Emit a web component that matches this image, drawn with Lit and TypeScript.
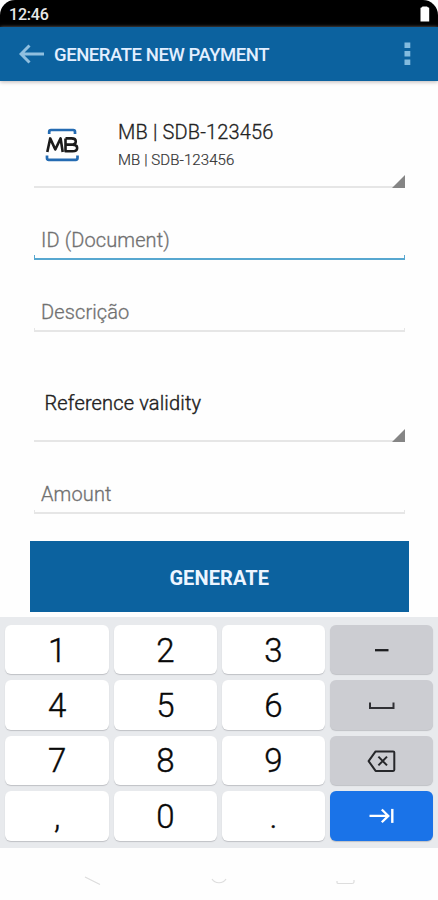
import { LitElement, html, css, svg, nothing } from "lit";
import { customElement, property } from "lit/decorators.js";

@customElement("form-field")
class FormField extends LitElement {
  @property() label = "";
  @property({ type: Boolean, reflect: true }) active = false;
  static styles = css`
    :host { display: flex; box-sizing: border-box; height: 40px; padding-left: 7px; align-items: flex-end; position: relative; }
    .label { font-size: 20px; line-height: 24px; margin-bottom: 7.6px; color: #707070; white-space: nowrap; font-weight: 300; letter-spacing: 0.12px; -webkit-text-stroke: 0.3px #707070; }
    .rule { position: absolute; left: 0; right: 0; bottom: 0; height: 4px; box-sizing: border-box; border: 1px solid #e6e6e6; border-top: 0; border-bottom-width: 2px; }
    :host([active]) .rule { height: 5px; border-color: #57a7d0; }
  `;
  render() {
    return html`<span class="label">${this.label}</span><span class="rule"></span>`;
  }
}

@customElement("spinner-field")
class SpinnerField extends LitElement {
  static styles = css`
    :host { display: flex; box-sizing: border-box; border-bottom: 2px solid #e6e6e6; position: relative; }
    .corner { position: absolute; right: 0; bottom: -2px; width: 13px; height: 13px; display: block; }
  `;
  render() {
    return html`<slot></slot>
      <svg class="corner" viewBox="0 0 13 13"><path d="M13 0V13H0Z" fill="#858585" /></svg>`;
  }
}

const minus = svg`<path d="M14 21.2H27.5" stroke="#1c1d20" stroke-width="2.3" />`;
const space = svg`<path d="M9 17.6V23H32.5V17.6" stroke="#303135" stroke-width="2" />`;
const erase = svg`<path d="M14.6 11.4H32.2Q33.3 11.4 33.3 12.5V29.8Q33.3 30.9 32.2 30.9H14.6L7.6 21.1Z" stroke="#26272a" stroke-width="2" stroke-linejoin="round" /><path d="M17.4 16.6L26 25.4M26 16.6L17.4 25.4" stroke="#26272a" stroke-width="2" />`;
const next = svg`<path d="M8.5 20.9H27M20.8 14.5L27.3 20.9L20.8 27.3" stroke="#fff" stroke-width="2.3" /><path d="M31.3 13.9V27.9" stroke="#fff" stroke-width="2.4" />`;

const keys: { text?: string; icon?: unknown; kind?: string }[] = [
  { text: "1" }, { text: "2" }, { text: "3" }, { icon: minus, kind: "side" },
  { text: "4" }, { text: "5" }, { text: "6" }, { icon: space, kind: "side" },
  { text: "7" }, { text: "8" }, { text: "9" }, { icon: erase, kind: "side" },
  { text: "," }, { text: "0" }, { text: "." }, { icon: next, kind: "go" },
];

@customElement("number-pad")
class NumberPad extends LitElement {
  static styles = css`
    :host { display: grid; box-sizing: border-box; height: 231px; padding: 8px 4.6px 7.5px 5.4px; background: #e8eaed; grid-template-columns: repeat(4, 1fr); grid-template-rows: repeat(4, 1fr); column-gap: 4.6px; row-gap: 6.2px; }
    .key { display: flex; align-items: center; justify-content: center; border-radius: 6px; background: #fff; box-shadow: 0 1px 1px #bfc1c5; color: #080808; font-size: 33px; line-height: 40px; font-weight: 300; -webkit-text-stroke: 0.4px #080808; padding-top: 2px; box-sizing: border-box; min-height: 0; }
    .side { background: #cccdd2; }
    .go { background: #1a73e8; }
    .side, .go { padding: 0; }
    .icon { display: block; width: 41px; height: 41px; fill: none; }
  `;
  render() {
    return keys.map(
      (k) => html`<div class="key ${k.kind ?? ""}">${k.text ?? nothing}${k.icon
        ? html`<svg class="icon" viewBox="0 0 41 41">${k.icon}</svg>`
        : nothing}</div>`
    );
  }
}

@customElement("app-root")
class AppRoot extends LitElement {
  static styles = css`
    :host { display: flex; flex-direction: column; width: 438px; height: 900px; overflow: hidden; background: #fefefe; font-family: Roboto, sans-serif; }
    .status { height: 27px; flex: none; background: #000; border-radius: 15px 15px 0 0; display: flex; justify-content: space-between; box-sizing: border-box; padding: 0 8px 0 9px; color: #e8e8e8; font-size: 16px; line-height: 29px; font-weight: 500; letter-spacing: -0.2px; }
    .battery { width: 10px; height: 16px; margin-top: 6px; }
    .bar { height: 53.5px; flex: none; background: #0c629f; display: flex; align-items: center; padding: 0 27px 0 19px; box-shadow: 0 1px 4px #bdb5b5; }
    .back { width: 26px; height: 20px; margin-right: 9px; }
    .title { flex: 1; color: #e3efff; font-size: 18.5px; font-weight: 500; letter-spacing: -0.44px; white-space: nowrap; padding-top: 2px; }
    .more { width: 7px; height: 24px; }
    .form { flex: none; height: 536.5px; box-sizing: border-box; padding: 0 29.5px 0 30px; display: flex; flex-direction: column; }
    .form > * { flex: none; }
    spinner-field, form-field { margin: 32px 3.5px 0 4px; }
    .account { height: 68px; margin-top: 39.5px; }
    .logo { width: 36px; height: 36px; margin: 7px 0 0 10px; }
    .names { display: flex; flex-direction: column; margin-left: 38px; }
    .name { font-size: 20px; line-height: 24px; color: #222; white-space: nowrap; font-weight: 300; letter-spacing: 0.15px; -webkit-text-stroke: 0.3px #222; }
    .sub { font-size: 15px; line-height: 20px; margin-top: 6px; color: #333; white-space: nowrap; font-weight: 300; letter-spacing: 0.1px; -webkit-text-stroke: 0.2px #333; }
    .validity { height: 60px; margin-top: 50px; }
    .validity-label { font-size: 20px; line-height: 24px; margin: 9px 0 0 10.5px; color: #222; font-weight: 300; letter-spacing: 0.15px; -webkit-text-stroke: 0.4px #222; }
    .generate { border: 0; padding: 2px 0 0; margin-top: 27px; height: 71px; background: #0c629f; color: #edf5ff; font: 700 20px Roboto, sans-serif; letter-spacing: 0.1px; }
    .nav { flex: 1; display: flex; justify-content: center; }
    .nav svg { width: 280px; height: 20px; margin-top: 22px; }
  `;
  render() {
    return html`
      <div class="status">
        <span>12:46</span>
        <svg class="battery" viewBox="0 0 10 16"><path d="M1 1.8Q2 1.5 2.5 0.5H7Q7.5 1.5 9.2 1.8V15.5H.5V1.8Z" fill="#fff" /></svg>
      </div>
      <div class="bar">
        <svg class="back" viewBox="0 0 26 20"><path d="M2 10H25M10.5 1.5L2 10L10.5 18.5" fill="none" stroke="#90bfdf" stroke-width="3" /></svg>
        <span class="title">GENERATE NEW PAYMENT</span>
        <svg class="more" viewBox="0 0 7 24"><path d="M.5 .5H6.3V6H.5ZM.5 9H6.3V14.5H.5ZM.5 17.5H6.3V23H.5Z" fill="#83bbdf" /></svg>
      </div>
      <div class="form">
        <spinner-field class="account">
          <svg class="logo" viewBox="0 0 36 36">
            <path d="M5.2 7V4.7Q5.2 3 7 3H29.2Q31 3 31 4.7V7M3 28.4V31Q3 32.8 4.7 32.8H31.7Q33.5 32.8 33.5 31V28.4" fill="none" stroke="#246bb2" stroke-width="2.7" />
            <path d="M3.3 25L6.2 11.4L11.3 22.5L16.6 11.4L18.7 25M21.5 11.4V24.3H28.5C34.7 24.3 34.7 17.6 28.5 17.6H21.5M21.5 11.4H27.5C33.2 11.4 33.2 17.6 27.5 17.6" fill="none" stroke="#1b1b1b" stroke-width="2.6" stroke-linejoin="round" />
          </svg>
          <div class="names">
            <span class="name">MB | SDB-123456</span>
            <span class="sub">MB | SDB-123456</span>
          </div>
        </spinner-field>
        <form-field label="ID (Document)" active></form-field>
        <form-field label="Descrição"></form-field>
        <spinner-field class="validity"><span class="validity-label">Reference validity</span></spinner-field>
        <form-field label="Amount"></form-field>
        <button class="generate">GENERATE</button>
      </div>
      <number-pad></number-pad>
      <div class="nav">
        <svg viewBox="0 0 280 20" fill="none" stroke="#ddd" stroke-width="1.2">
          <path d="M6 7L21 14.5M133 9C136 14 144 14 147 9M258 11V12.5Q258 13.5 259.5 13.5H273Q275 13.5 275 12V10" />
        </svg>
      </div>
    `;
  }
}
